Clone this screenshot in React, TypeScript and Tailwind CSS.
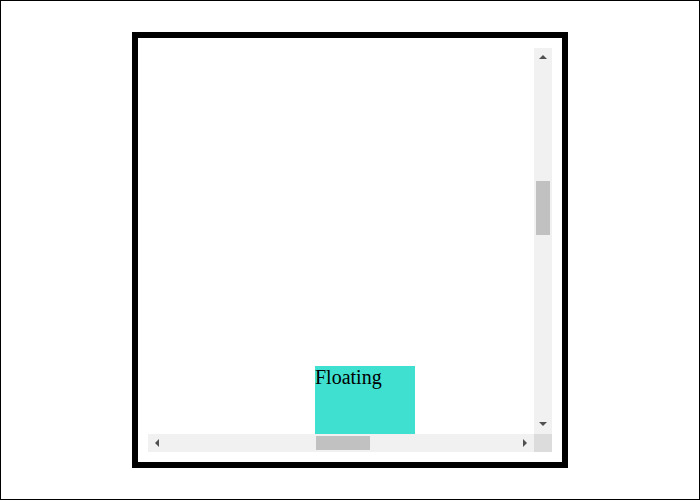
function Arrow({ points }: { points: string }) {
  return (
    <svg width="18" height="18" viewBox="0 0 18 18" className="block">
      <polygon points={points} fill="#505050" />
    </svg>
  );
}

export default function App() {
  return (
    <div className="w-[700px] h-[500px] border border-black bg-white flex items-center justify-center">
      <div className="border-[6px] border-black p-[10px] bg-white">
        <div className="w-[404px] h-[404px] grid grid-cols-[386px_18px] grid-rows-[386px_18px]">
          <div className="overflow-hidden bg-white">
            <div className="pt-[318px] pl-[167px]">
              <div
                className="w-[100px] h-[100px] bg-[#40e0d0] text-black text-[20px] leading-[23px]"
                style={{ fontFamily: '"Liberation Serif", "Times New Roman", serif' }}
              >
                Floating
              </div>
            </div>
          </div>
          <div className="flex flex-col bg-[#f1f1f1]">
            <Arrow points="5,11 13,11 9,7" />
            <div className="flex-1">
              <div className="mt-[115px] mx-[2px] h-[54px] bg-[#c1c1c1]" />
            </div>
            <Arrow points="5,6 13,6 9,10" />
          </div>
          <div className="flex flex-row bg-[#f1f1f1]">
            <Arrow points="7,9 11,5 11,13" />
            <div className="flex-1">
              <div className="ml-[150px] my-[2px] w-[54px] h-[14px] bg-[#c1c1c1]" />
            </div>
            <Arrow points="7,5 7,13 11,9" />
          </div>
          <div className="bg-[#dcdcdc]" />
        </div>
      </div>
    </div>
  );
}
